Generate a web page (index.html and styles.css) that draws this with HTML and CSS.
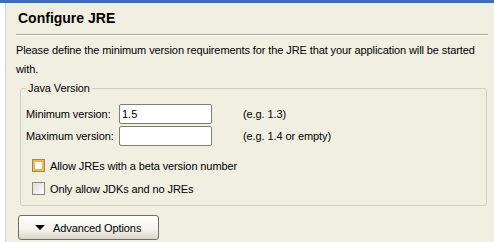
FILE: index.html
```html
<!DOCTYPE html>
<html lang="en">

<head>
  <meta charset="UTF-8">
  <meta name="viewport" content="width=device-width, initial-scale=1.0">
  <title>Configure JRE</title>
  <link rel="stylesheet" href="styles.css">
</head>

<body>
  <div class="window">
    <div class="side"></div>
    <div class="main">
      <h1 class="title">Configure JRE</h1>
      <p class="desc">Please define the minimum version requirements for the JRE that your application will be started with.</p>

      <fieldset class="group">
        <legend>Java Version</legend>
        <div class="rows">
          <label>Minimum version:</label>
          <input type="text" value="1.5">
          <span class="hint">(e.g. 1.3)</span>

          <label>Maximum version:</label>
          <input type="text" value="">
          <span class="hint">(e.g. 1.4 or empty)</span>
        </div>

        <div class="checks">
          <div class="check"><span class="box hover"></span>Allow JREs with a beta version number</div>
          <div class="check"><span class="box"></span>Only allow JDKs and no JREs</div>
        </div>
      </fieldset>

      <button class="btn"><span class="arrow"></span>Advanced Options</button>
    </div>
  </div>
</body>

</html>
```

FILE: styles.css
```css
* {
  margin: 0;
  padding: 0;
  box-sizing: border-box;
}

html,
body {
  height: 100%;
}

body {
  background-color: #f1efe2;
  font-family: "Liberation Sans", Arial, sans-serif;
  font-size: 11px;
  letter-spacing: -0.1px;
  color: #000;
  overflow: hidden;
}

.window {
  display: flex;
  height: 100%;
  border-top: 3px solid #3c6db5;
}

.side {
  width: 6px;
  background-color: #fff;
  border-right: 1px solid #d4d0c8;
}

.main {
  flex: 1;
  padding: 0 6px 0 10px;
}

.title {
  font-size: 14px;
  font-weight: bold;
  letter-spacing: 0;
  height: 32px;
  padding: 7px 0 0 2px;
  border-bottom: 1px solid #aca899;
  box-shadow: 0 1px 0 #fff;
}

.desc {
  line-height: 19px;
  margin-top: 6px;
}

.group {
  margin: 3px 1px 0 4px;
  height: 124px;
  border: 1px solid #d0d0bf;
  border-radius: 3px;
  padding: 0 0 0 5px;
}

.group legend {
  padding: 0 2px;
  margin-left: 0;
  line-height: 13px;
}

.rows {
  display: grid;
  grid-template-columns: 93px 93px auto;
  row-gap: 2px;
  align-items: center;
  margin-top: 9px;
}

.rows input {
  height: 20px;
  border: 1px solid #7f7f72;
  border-radius: 2px;
  background-color: #fff;
  font-family: inherit;
  font-size: 11px;
  padding: 0 2px;
  outline: none;
}

.hint {
  margin-left: 31px;
}

.checks {
  margin-top: 13px;
  padding-left: 6px;
  display: flex;
  flex-direction: column;
  gap: 10px;
}

.check {
  display: flex;
  align-items: center;
  gap: 5px;
  height: 13px;
}

.box {
  width: 13px;
  height: 13px;
  border: 1px solid #8c8a7e;
  background: linear-gradient(135deg, #dcdbd3, #fff);
}

.box.hover {
  box-shadow: inset 0 0 0 2px #f8b53f;
  background: #fff;
}

.btn {
  display: flex;
  align-items: center;
  margin: 9px 0 0 2px;
  width: 141px;
  height: 25px;
  border: 1px solid #6f6e63;
  border-radius: 3px;
  background: linear-gradient(#ffffff, #f3f2ec 60%, #d9d7cb);
  font-family: inherit;
  font-size: 11px;
  letter-spacing: -0.1px;
  padding-left: 16px;
  color: #000;
}

.arrow {
  width: 0;
  height: 0;
  border-left: 5px solid transparent;
  border-right: 5px solid transparent;
  border-top: 5px solid #000;
  margin-right: 8px;
}
```
